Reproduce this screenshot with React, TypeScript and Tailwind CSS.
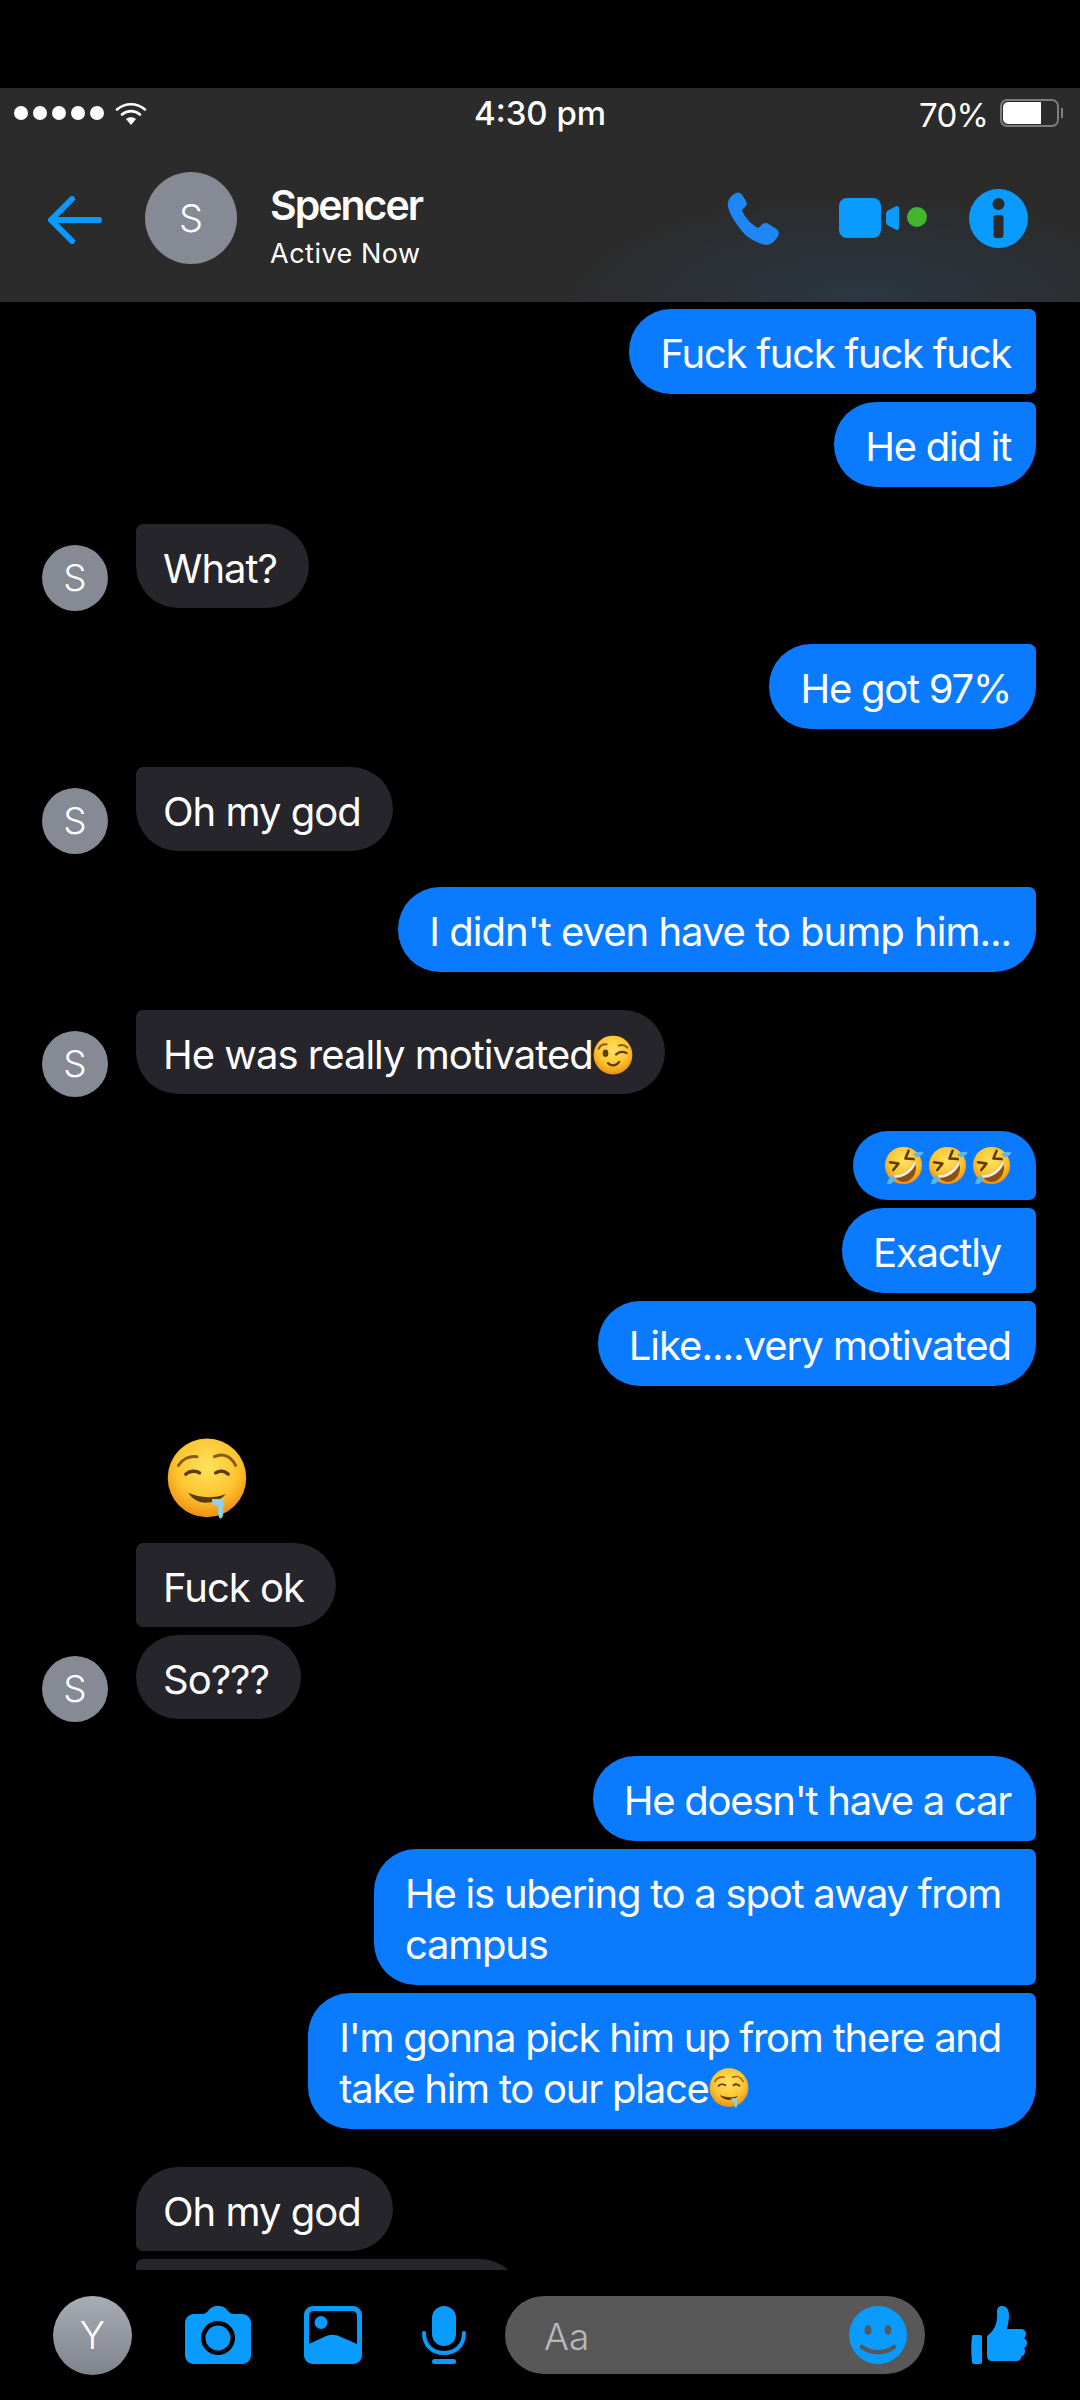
import type { ReactNode } from "react";

const FONT = "font-['Inter','Liberation_Sans',sans-serif]";

function EmojiDefs() {
  return (
    <svg width="0" height="0" className="absolute">
      <defs>
        <radialGradient id="face" cx="50%" cy="36%" r="64%">
          <stop offset="0%" stopColor="#ffe25f" />
          <stop offset="62%" stopColor="#fdc52f" />
          <stop offset="100%" stopColor="#ec8f16" />
        </radialGradient>
      </defs>
    </svg>
  );
}

function WinkEmoji() {
  return (
    <svg viewBox="0 0 64 64" className="inline-block w-[40px] h-[40px] align-[-6px]">
      <circle cx="32" cy="32" r="31" fill="url(#face)" />
      <path d="M9 22c3-6 8-8 13-7" fill="none" stroke="#8a5a14" strokeWidth="3" strokeLinecap="round" />
      <path d="M41 17c5-2 10-1 14 3" fill="none" stroke="#8a5a14" strokeWidth="3" strokeLinecap="round" />
      <ellipse cx="20" cy="29" rx="4.500" ry="6" fill="#5b3a0e" />
      <path d="M37 31c5-5 11-5 17-2" fill="none" stroke="#5b3a0e" strokeWidth="3.500" strokeLinecap="round" />
      <path d="M24 45c5 5 13 5 18-2" fill="none" stroke="#5b3a0e" strokeWidth="3.500" strokeLinecap="round" />
    </svg>
  );
}

function RoflEmoji() {
  return (
    <svg viewBox="0 0 64 64" className="w-[41px] h-[41px] shrink-0">
      <circle cx="32" cy="32" r="29" fill="url(#face)" />
      <path d="M11 27l13 2-8 10" fill="none" stroke="#5b3a0e" strokeWidth="4" strokeLinecap="round" strokeLinejoin="round" />
      <path d="M40 9l-5 12 13 1" fill="none" stroke="#5b3a0e" strokeWidth="4" strokeLinecap="round" strokeLinejoin="round" />
      <path d="M16 47c13 1 27-8 33-22 6 12 1 26-10 31-9 4-18 0-23-9z" fill="#8e4f12" />
      <path d="M16 47c13 1 27-8 33-22l2 5c-6 13-20 22-32 21z" fill="#f4efe6" />
      <path d="M47 15c4-4 10-5 16-4-1 5-6 8-11 8z" fill="#5bb6ea" />
      <path d="M15 48c-5 2-8 7-9 13 5 1 11-2 13-8z" fill="#5bb6ea" />
    </svg>
  );
}

function DroolEmoji({ className }: { className: string }) {
  return (
    <svg viewBox="0 0 64 65" className={className}>
      <circle cx="32" cy="32" r="31.500" fill="url(#face)" />
      <path d="M9 22c3-5 9-8 15-7" fill="none" stroke="#8a5a14" strokeWidth="2.400" strokeLinecap="round" />
      <path d="M38 15c6-3 13-1 17 7" fill="none" stroke="#8a5a14" strokeWidth="2.400" strokeLinecap="round" />
      <path d="M15 29c3-3 8-3 11-1" fill="none" stroke="#5b3a0e" strokeWidth="2.800" strokeLinecap="round" />
      <path d="M39 28c3-2 7-2 10 1" fill="none" stroke="#5b3a0e" strokeWidth="2.800" strokeLinecap="round" />
      <path d="M17 44c8 4 20 5 30 1-4 5-10 7-16 7-6 0-11-3-14-8z" fill="#5b3a0e" />
      <path d="M36 49h9v11c0 2-.5 4.500-2 4.500s-2-2.500-2-4.500v-6h-3c-1.500 0-2-2-2-5z" fill="#8fd0ea" />
    </svg>
  );
}

function Bubble({
  mine,
  wide,
  className,
  children,
}: {
  mine?: boolean;
  wide?: boolean;
  className: string;
  children: ReactNode;
}) {
  return (
    <div
      className={`text-[40px] leading-[51px] text-white pt-[19px] whitespace-nowrap ${
        mine
          ? `bg-[#0a7bff] pl-[31px] pb-[15px] tracking-[-1.250px] ${wide ? "pr-[35px]" : "pr-[25px]"}`
          : "bg-[#26252b] pl-[27px] pr-[32px] pb-[14px] tracking-[-1px]"
      } ${className}`}
    >
      {children}
    </div>
  );
}

function ChatAvatar({ hidden }: { hidden?: boolean }) {
  return (
    <div className="w-[66px] mr-[28px] shrink-0">
      {!hidden && (
        <div className="w-[66px] h-[66px] -mb-[3px] rounded-full bg-[#868a94] flex items-center justify-center text-white text-[37px] font-light">
          S
        </div>
      )}
    </div>
  );
}

function MineGroup({ className, children }: { className: string; children: ReactNode }) {
  return <div className={`flex flex-col items-end gap-[8px] pr-[44px] ${className}`}>{children}</div>;
}

function TheirRow({ className, hidden, children }: { className: string; hidden?: boolean; children: ReactNode }) {
  return (
    <div className={`flex items-end pl-[42px] ${className}`}>
      <ChatAvatar hidden={hidden} />
      <div className="flex flex-col items-start gap-[8px]">{children}</div>
    </div>
  );
}

function StatusBar() {
  return (
    <div className="relative h-[50px] flex items-center justify-between pl-[14px] pr-[17px]">
      <div className="flex items-center">
        <div className="flex gap-[5px]">
          <div className="w-[14px] h-[14px] rounded-full bg-white" />
          <div className="w-[14px] h-[14px] rounded-full bg-white" />
          <div className="w-[14px] h-[14px] rounded-full bg-white" />
          <div className="w-[14px] h-[14px] rounded-full bg-white" />
          <div className="w-[14px] h-[14px] rounded-full bg-white" />
        </div>
        <svg viewBox="0 0 32 23" className="w-[32px] h-[23px] ml-[11px]">
          <path d="M2 7.500C10 .5 22 .5 30 7.500" fill="none" stroke="#fff" strokeWidth="2.600" strokeLinecap="round" />
          <path d="M7 12.500c5.500-4.500 12.500-4.500 18 0" fill="none" stroke="#fff" strokeWidth="2.600" strokeLinecap="round" />
          <path d="M11 17c3-2.500 7-2.500 10 0l-5 6z" fill="#fff" />
        </svg>
      </div>
      <div className="absolute left-[474px] top-[6px] text-white text-[33px] font-medium leading-[38px]">
        4:30 pm
      </div>
      <div className="flex items-center">
        <span className="text-white text-[33px] leading-[38px] tracking-[-0.8px] mr-[12px] mt-[3px]">70%</span>
        <div className="w-[59px] h-[28px] rounded-[7px] border-2 border-[#7d7d7d] p-[1px]">
          <div className="w-[38px] h-full rounded-l-[5px] bg-white" />
        </div>
        <div className="w-[2px] h-[10px] ml-[2px] bg-[#7d7d7d]" />
      </div>
    </div>
  );
}

function Header() {
  return (
    <div className="h-[214px] shrink-0 bg-[radial-gradient(ellipse_300px_110px_at_860px_100%,#2b3743,#2b2b2b)]">
      <StatusBar />
      <div className="flex items-center h-[164px] pb-[4px] pl-[48px]">
        <svg viewBox="0 0 54 48" className="w-[54px] h-[48px] shrink-0 mt-[4px]">
          <path d="M24 3L3 24l21 21M4 24h47" fill="none" stroke="#0a9bff" strokeWidth="6" strokeLinecap="round" strokeLinejoin="round" />
        </svg>
        <div className="w-[92px] h-[92px] ml-[43px] rounded-full bg-[#868a94] flex items-center justify-center text-white text-[38px] font-light shrink-0">
          S
        </div>
        <div className="ml-[33px] w-[200px] mt-[16px]">
          <div className="text-white text-[41px] font-semibold leading-[46px] tracking-[-2px]">Spencer</div>
          <div className="text-white text-[27px] leading-[34px] tracking-[0.5px] mt-[9px]">Active Now</div>
        </div>
        <div className="flex items-center ml-[257px]">
          <svg viewBox="0 0 53 53" className="w-[53px] h-[53px]">
            <path
              d="M9 1c3-1.500 5 0 7 3l3 5c1 2 1 4-1 6l-3 3c2 6 8 13 14 17 1.500 1 2.500 1 3.500 0l3-3c2-1.500 4-1.500 6 0l8 5c3 2 3 5 1 8-3 5-7 8-12 8-5-1-13-4-21-11C9 32 3 23 1 15 0 9 3 4 9 1z"
              fill="#1f87f5"
            />
          </svg>
          <svg viewBox="0 0 100 58" className="w-[100px] h-[58px] ml-[59px]">
            <rect x="0" y="9" width="42" height="40" rx="8" fill="#0a9bff" />
            <path d="M47 25c0-1.500.7-2.700 2-3.500l8-4.300c1.300-.7 3 .2 3 1.800v20c0 1.600-1.700 2.500-3 1.800l-8-4.300c-1.300-.8-2-2-2-3.500z" fill="#0a9bff" />
            <circle cx="78" cy="28" r="10" fill="#44b52f" />
          </svg>
          <svg viewBox="0 0 59 59" className="w-[59px] h-[59px] ml-[30px]">
            <circle cx="29.500" cy="29.500" r="29.500" fill="#0a9bff" />
            <circle cx="29.500" cy="15" r="6" fill="#2b2b2b" />
            <rect x="24.500" y="26" width="10" height="23" rx="3" fill="#2b2b2b" />
          </svg>
        </div>
      </div>
    </div>
  );
}

function Messages() {
  return (
    <div className="h-[1968px] overflow-hidden pt-[7px] shrink-0">
      <MineGroup className="">
        <Bubble mine className="rounded-l-[42px] rounded-r-[7px]">Fuck fuck fuck fuck</Bubble>
        <Bubble mine className="rounded-l-[42px] rounded-tr-[7px] rounded-br-[42px]">He did it</Bubble>
      </MineGroup>
      <TheirRow className="mt-[37px]">
        <Bubble className="rounded-r-[42px] rounded-tl-[7px] rounded-bl-[42px]">What?</Bubble>
      </TheirRow>
      <MineGroup className="mt-[36px]">
        <Bubble mine className="rounded-l-[42px] rounded-tr-[7px] rounded-br-[42px]">He got 97%</Bubble>
      </MineGroup>
      <TheirRow className="mt-[38px]">
        <Bubble className="rounded-r-[42px] rounded-tl-[7px] rounded-bl-[42px]">Oh my god</Bubble>
      </TheirRow>
      <MineGroup className="mt-[36px]">
        <Bubble mine className="rounded-l-[42px] rounded-tr-[7px] rounded-br-[42px]">
          <span className="tracking-[-1px]">I didn't even have to bump him...</span>
        </Bubble>
      </MineGroup>
      <TheirRow className="mt-[38px]">
        <Bubble className="rounded-r-[42px] rounded-tl-[7px] rounded-bl-[42px]">
          He was really motivated
          <WinkEmoji />
        </Bubble>
      </TheirRow>
      <MineGroup className="mt-[37px]">
        <div className="flex gap-[3px] items-center h-[69px] pl-[30px] pr-[24px] rounded-l-[35px] rounded-tr-[35px] rounded-br-[7px] bg-[#0a7bff]">
          <RoflEmoji />
          <RoflEmoji />
          <RoflEmoji />
        </div>
        <Bubble mine wide className="rounded-l-[42px] rounded-r-[7px]">Exactly</Bubble>
        <Bubble mine className="rounded-l-[42px] rounded-tr-[7px] rounded-br-[42px]">
          <span className="tracking-[-1px]">Like....very motivated</span>
        </Bubble>
      </MineGroup>
      <div className="pl-[167px] mt-[52px]">
        <DroolEmoji className="block w-[80px] h-[81px]" />
      </div>
      <TheirRow className="mt-[24px]">
        <Bubble className="rounded-r-[42px] rounded-l-[7px]">Fuck ok</Bubble>
        <Bubble className="rounded-[42px]">So???</Bubble>
      </TheirRow>
      <MineGroup className="mt-[37px]">
        <Bubble mine className="rounded-l-[42px] rounded-tr-[42px] rounded-br-[7px]">He doesn't have a car</Bubble>
        <Bubble mine wide className="rounded-l-[42px] rounded-r-[7px]">
          He is ubering to a spot away from
          <br />
          campus
        </Bubble>
        <Bubble mine wide className="rounded-l-[42px] rounded-tr-[7px] rounded-br-[42px]">
          I'm gonna pick him up from there and
          <br />
          take him to our place
          <DroolEmoji className="inline-block w-[40px] h-[40px] align-[-5px]" />
        </Bubble>
      </MineGroup>
      <TheirRow className="mt-[38px]" hidden>
        <Bubble className="rounded-r-[42px] rounded-tl-[42px] rounded-bl-[7px]">Oh my god</Bubble>
        <div className="w-[386px] h-[84px] rounded-r-[42px] rounded-l-[7px] bg-[#26252b]" />
      </TheirRow>
    </div>
  );
}

function Composer() {
  return (
    <div className="flex items-center h-[130px] pl-[53px] shrink-0">
      <div className="w-[79px] h-[79px] rounded-full bg-gradient-to-b from-[#a8acb5] to-[#7f838c] flex items-center justify-center text-white text-[38px] font-light shrink-0">
        Y
      </div>
      <svg viewBox="0 0 66 58" className="w-[66px] h-[58px] ml-[53px] shrink-0">
        <path
          fillRule="evenodd"
          d="M9 8h8c3 0 4-1 6-3 2-3 5-5 10-5s8 2 10 5c2 2 3 3 6 3h8c5 0 9 4 9 9v32c0 5-4 9-9 9H9c-5 0-9-4-9-9V17c0-5 4-9 9-9zm24 7a17 17 0 1 0 0 34 17 17 0 0 0 0-34zm0 4.500a12.500 12.500 0 1 1 0 25 12.500 12.500 0 0 1 0-25z"
          fill="#0a9bff"
        />
      </svg>
      <svg viewBox="0 0 58 58" className="w-[58px] h-[58px] ml-[53px] shrink-0">
        <path
          fillRule="evenodd"
          d="M9 0h40c5 0 9 4 9 9v40c0 5-4 9-9 9H9c-5 0-9-4-9-9V9c0-5 4-9 9-9zm1 5c-3 0-5 2-5 5v28l15-7c6-3 11-3 17 0l16 7V10c0-3-2-5-5-5H10zm7 5a6.500 6.500 0 1 1 0 13 6.500 6.500 0 0 1 0-13z"
          fill="#0a9bff"
        />
      </svg>
      <svg viewBox="0 0 44 58" className="w-[44px] h-[58px] ml-[60px] shrink-0">
        <rect x="10" y="0" width="24" height="40" rx="12" fill="#0a9bff" />
        <path d="M2 27c0 12 8 20 20 20s20-8 20-20" fill="none" stroke="#0a9bff" strokeWidth="4" strokeLinecap="round" />
        <rect x="10" y="53" width="24" height="5" rx="2.500" fill="#0a9bff" />
      </svg>
      <div className="flex items-center justify-between w-[420px] h-[78px] ml-[39px] pl-[39px] pr-[18px] rounded-full bg-[#585858] shrink-0">
        <span className="text-[#b9b9b9] text-[37px] font-light pt-[4px]">Aa</span>
        <svg viewBox="0 0 58 58" className="w-[58px] h-[58px]">
          <circle cx="29" cy="29" r="29" fill="#0a9bff" />
          <ellipse cx="19" cy="24" rx="3.500" ry="5" fill="#585858" />
          <ellipse cx="39" cy="24" rx="3.500" ry="5" fill="#585858" />
          <path d="M13 41c9 7 23 7 32 0" fill="none" stroke="#585858" strokeWidth="4.500" strokeLinecap="round" />
        </svg>
      </div>
      <svg viewBox="0 0 57 58" className="w-[57px] h-[58px] ml-[45px] shrink-0">
        <path d="M3 29h7c1.500 0 2 1 2 2v25c0 1-.5 2-2 2H4c-1 0-2-1-2-2-1-9-1-18 0-25 0-1 .5-2 1-2z" fill="#0a9bff" />
        <path d="M17 30c7-5 11-12 10-25 0-3 2-5 5-5 4 0 7 3 7 9 0 5-1 10-2 14h13c4 0 6 2 6 5 0 2-1 3-2 4 2 1 3 3 3 5s-1 4-3 5c1 1 1 2 1 4 0 2-2 4-4 5 0 3-2 4-6 4H22c-3 0-5-2-5-5z" fill="#0a9bff" />
      </svg>
    </div>
  );
}

export default function App() {
  return (
    <div className={`w-[1080px] h-[2400px] bg-black overflow-hidden ${FONT}`}>
      <EmojiDefs />
      <div className="h-[88px]" />
      <Header />
      <Messages />
      <Composer />
    </div>
  );
}
